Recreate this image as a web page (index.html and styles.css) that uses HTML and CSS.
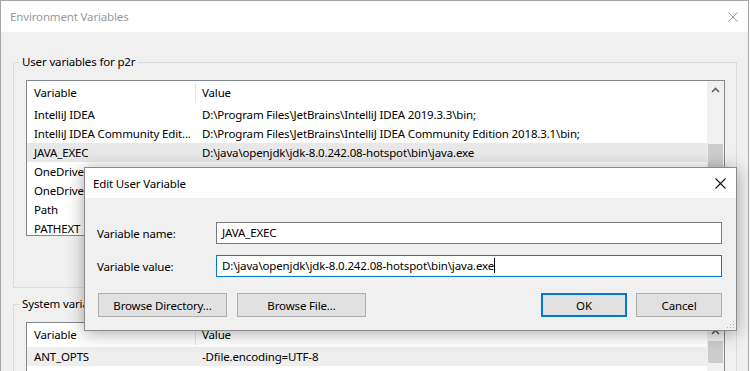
FILE: index.html
```html
<!DOCTYPE html>
<html lang="en">
<head>
  <meta charset="UTF-8">
  <title>Environment Variables</title>
  <link rel="stylesheet" href="styles.css">
</head>
<body>
  <div class="window">
    <div class="titlebar">
      <span>Environment Variables</span>
      <svg class="close" width="10" height="10" viewBox="0 0 10 10"><path d="M0.5 0.5L9.5 9.5M9.5 0.5L0.5 9.5" stroke="#999" stroke-width="1"/></svg>
    </div>
    <div class="client">
      <fieldset class="group">
        <legend>User variables for p2r</legend>
        <div class="list user-list">
          <div class="rows">
            <div class="head"><div class="cell">Variable</div><div class="cell">Value</div></div>
            <div class="row"><div class="cell">IntelliJ IDEA</div><div class="cell">D:\Program Files\JetBrains\IntelliJ IDEA 2019.3.3\bin;</div></div>
            <div class="row"><div class="cell">IntelliJ IDEA Community Edit...</div><div class="cell">D:\Program Files\JetBrains\IntelliJ IDEA Community Edition 2018.3.1\bin;</div></div>
            <div class="row sel"><div class="cell">JAVA_EXEC</div><div class="cell">D:\java\openjdk\jdk-8.0.242.08-hotspot\bin\java.exe</div></div>
            <div class="row"><div class="cell">OneDrive</div><div class="cell">C:\Users\p2r\OneDrive</div></div>
            <div class="row"><div class="cell">OneDrive</div><div class="cell"></div></div>
            <div class="row"><div class="cell">Path</div><div class="cell"></div></div>
            <div class="row"><div class="cell">PATHEXT</div><div class="cell"></div></div>
          </div>
          <div class="scrollbar">
            <div class="arrow"><svg width="9" height="6" viewBox="0 0 9 6"><path d="M1 5L4.5 1.5L8 5" stroke="#606060" stroke-width="1.6" fill="none"/></svg></div>
            <div class="track user-track"><div class="thumb"></div></div>
          </div>
        </div>
        <div class="actions"></div>
      </fieldset>

      <fieldset class="group system">
        <legend>System variables</legend>
        <div class="list sys-list">
          <div class="rows">
            <div class="head"><div class="cell">Variable</div><div class="cell">Value</div></div>
            <div class="row hover"><div class="cell">ANT_OPTS</div><div class="cell">-Dfile.encoding=UTF-8</div></div>
          </div>
          <div class="scrollbar">
            <div class="arrow"><svg width="9" height="6" viewBox="0 0 9 6"><path d="M1 5L4.5 1.5L8 5" stroke="#606060" stroke-width="1.6" fill="none"/></svg></div>
            <div class="track"><div class="thumb"></div></div>
          </div>
        </div>
      </fieldset>
    </div>
  </div>

  <div class="dialog">
    <div class="dlg-title">
      <span>Edit User Variable</span>
      <svg width="11" height="11" viewBox="0 0 11 11"><path d="M0.5 0.5L10.5 10.5M10.5 0.5L0.5 10.5" stroke="#111" stroke-width="1.1"/></svg>
    </div>
    <div class="dlg-body">
      <div class="form">
        <label>Variable name:</label>
        <div class="field">JAVA_EXEC</div>
        <label>Variable value:</label>
        <div class="field focused">D:\java\openjdk\jdk-8.0.242.08-hotspot\bin\java.exe<span class="caret"></span></div>
      </div>
      <div class="buttons">
        <button class="btn wide first">Browse Directory...</button>
        <button class="btn wide">Browse File...</button>
        <span class="spacer"></span>
        <button class="btn default">OK</button>
        <button class="btn">Cancel</button>
      </div>
    </div>
    <svg class="grip" width="9" height="9" viewBox="0 0 9 9" fill="#b5b5b5">
      <rect x="7" y="1" width="1" height="1"/><rect x="4" y="4" width="1" height="1"/><rect x="7" y="4" width="1" height="1"/>
      <rect x="1" y="7" width="1" height="1"/><rect x="4" y="7" width="1" height="1"/><rect x="7" y="7" width="1" height="1"/>
    </svg>
  </div>
</body>
</html>
```

FILE: styles.css
```css
* {
  box-sizing: border-box;
}
body {
  margin: 0;
  width: 750px;
  height: 371px;
  overflow: hidden;
  position: relative;
  background: #fff;
  font-family: "Noto Sans", "Open Sans", sans-serif;
  font-size: 11.5px;
  letter-spacing: -0.15px;
  color: #000;
}
.window {
  width: 749px;
  height: 371px;
  overflow: hidden;
  border: 1px solid #a6a6a6;
  border-bottom: none;
  background: #f0f0f0;
}
.titlebar {
  height: 31px;
  display: flex;
  align-items: center;
  justify-content: space-between;
  padding: 0 10px 0 9px;
  background: #fff;
  color: #999;
}
.client {
  padding: 22px 11px 0 12px;
}
.group {
  margin: 0;
  padding: 10px 11px 15px 12px;
  border: 1px solid #dcdcdc;
  min-width: 0;
}
.group legend {
  margin-left: -7px;
  padding: 0 3px;
  line-height: 16px;
}
.group.system {
  margin-top: 8px;
}
.list {
  display: flex;
  border: 1px solid #828790;
  background: #fff;
  overflow: hidden;
}
.user-list {
  height: 156px;
}
.sys-list {
  height: 80px;
}
.rows {
  flex: 1;
  min-width: 0;
}
.head,
.row {
  display: grid;
  grid-template-columns: 169px 1fr;
}
.head {
  height: 24px;
  line-height: 24px;
}
.head .cell:first-child {
  border-right: 1px solid #e5e5e5;
  margin: 2px 0;
  line-height: 20px;
}
.row {
  height: 19px;
  line-height: 19px;
}
.cell {
  padding-left: 7px;
  white-space: nowrap;
  overflow: hidden;
}
.cell + .cell {
  padding-left: 6px;
}
.row.sel {
  background: #e8e8e8;
}
.row.hover {
  background: #eeeeee;
}
.scrollbar {
  width: 17px;
  display: flex;
  flex-direction: column;
  background: #f0f0f0;
}
.arrow {
  height: 17px;
  display: flex;
  align-items: center;
  justify-content: center;
}
.track {
  flex: 1;
  padding: 0 1px;
}
.user-track {
  padding-top: 46px;
}
.sys-list .track {
  padding-top: 1px;
}
.thumb {
  height: 40px;
  background: #cdcdcd;
}
.sys-list .thumb {
  height: 22px;
}
.actions {
  height: 24px;
  margin-top: 12px;
}
.btn {
  width: 86px;
  height: 24px;
  padding: 0;
  font: inherit;
  letter-spacing: inherit;
  color: #000;
  background: #e1e1e1;
  border: 1px solid #adadad;
}
.dialog {
  position: absolute;
  left: 84px;
  top: 167px;
  width: 653px;
  height: 164px;
  border: 1px solid #8a8a8a;
  background: #f0f0f0;
  box-shadow: 0 2px 16px rgba(0, 0, 0, 0.35);
}
.dlg-title {
  height: 30px;
  display: flex;
  align-items: center;
  justify-content: space-between;
  padding: 0 10px 0 8px;
  background: #fff;
}
.dlg-body {
  padding: 24px 14px 13px 12px;
}
.form {
  display: grid;
  grid-template-columns: 119px 1fr;
  row-gap: 11px;
  align-items: center;
}
.field {
  height: 22px;
  line-height: 20px;
  padding-left: 5px;
  background: #fff;
  border: 1px solid #7a7a7a;
  white-space: nowrap;
}
.field.focused {
  border-color: #0078d7;
}
.caret {
  display: inline-block;
  width: 1px;
  height: 15px;
  background: #000;
  vertical-align: -3px;
}
.buttons {
  display: flex;
  gap: 10px;
  margin-top: 16px;
}
.btn.wide {
  width: 129px;
}
.btn.first {
  margin-left: 1px;
}
.spacer {
  flex: 1;
}
.buttons .btn:last-child {
  margin-left: -1px;
}
.btn.default {
  border: 2px solid #0078d7;
}
.grip {
  position: absolute;
  right: 1px;
  bottom: 1px;
}
```
